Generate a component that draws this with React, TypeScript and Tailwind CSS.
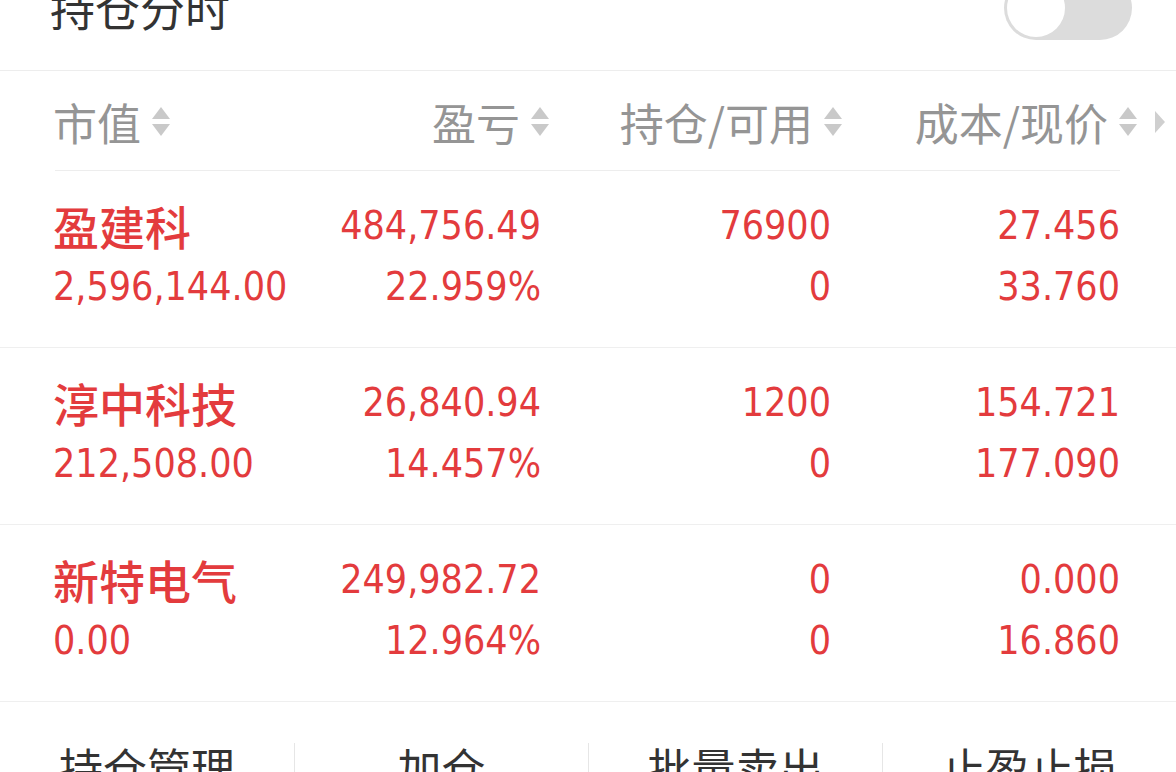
import React from 'react';

const cjk = '"Noto Sans CJK SC", "Noto Sans", sans-serif';
const num = '"DejaVu Sans Condensed", "DejaVu Sans", sans-serif';

interface Holding {
  name: string;
  value: string;
  pnl: string;
  pct: string;
  qty: string;
  avail: string;
  cost: string;
  price: string;
}

const holdings: Holding[] = [
  { name: '盈建科', value: '2,596,144.00', pnl: '484,756.49', pct: '22.959%', qty: '76900', avail: '0', cost: '27.456', price: '33.760' },
  { name: '淳中科技', value: '212,508.00', pnl: '26,840.94', pct: '14.457%', qty: '1200', avail: '0', cost: '154.721', price: '177.090' },
  { name: '新特电气', value: '0.00', pnl: '249,982.72', pct: '12.964%', qty: '0', avail: '0', cost: '0.000', price: '16.860' },
];

function SortArrows() {
  return (
    <svg width="20" height="32" viewBox="0 0 20 32" className="shrink-0">
      <polygon points="10,1 19,13 1,13" fill="#c9c9c9" />
      <polygon points="1,18 19,18 10,30" fill="#c9c9c9" />
    </svg>
  );
}

function HeaderCell({ label, end }: { label: string; end?: boolean }) {
  return (
    <div className={end ? 'flex items-center justify-end gap-[10px]' : 'flex items-center gap-[10px]'}>
      <span className="text-[44px] leading-[46px] text-[#959595]" style={{ fontFamily: cjk }}>
        {label}
      </span>
      <SortArrows />
    </div>
  );
}

function Row({ h }: { h: Holding }) {
  const n = 'text-[39px] leading-[61px] text-[#e33b3d]';
  return (
    <div className="grid grid-cols-[260px_228px_290px_289px] pl-[53px] pt-[24px] pb-[30px] border-b border-[#efefef]">
      <div className="flex flex-col">
        <span className="text-[46px] leading-[61px] font-medium text-[#e33b3d]" style={{ fontFamily: cjk }}>
          {h.name}
        </span>
        <span className={n} style={{ fontFamily: num }}>{h.value}</span>
      </div>
      <div className="flex flex-col items-end">
        <span className={n} style={{ fontFamily: num }}>{h.pnl}</span>
        <span className={n} style={{ fontFamily: num }}>{h.pct}</span>
      </div>
      <div className="flex flex-col items-end">
        <span className={n} style={{ fontFamily: num }}>{h.qty}</span>
        <span className={n} style={{ fontFamily: num }}>{h.avail}</span>
      </div>
      <div className="flex flex-col items-end">
        <span className={n} style={{ fontFamily: num }}>{h.cost}</span>
        <span className={n} style={{ fontFamily: num }}>{h.price}</span>
      </div>
    </div>
  );
}

export default function App() {
  const actions = ['持仓管理', '加仓', '批量卖出', '止盈止损'];
  return (
    <div className="w-[1176px] h-[772px] overflow-hidden bg-white">
      {/* title bar */}
      <div className="flex justify-between h-[71px] border-b border-[#ededed] pl-[50px] pr-[44px]">
        <span className="mt-[-15px] text-[45px] leading-[45px] text-[#333333]" style={{ fontFamily: cjk }}>
          持仓分时
        </span>
        <div className="mt-[-24px] w-[128px] h-[64px] rounded-full bg-[#dcdcdc] p-[3px]">
          <div className="w-[58px] h-[58px] rounded-full bg-white" />
        </div>
      </div>

      {/* column headers */}
      <div className="h-[100px] flex flex-col">
        <div className="flex-1 flex items-center pt-[2px]">
          <div className="grid grid-cols-[260px_237px_293px_295px] pl-[53px] items-center">
            <HeaderCell label="市值" />
            <HeaderCell label="盈亏" end />
            <HeaderCell label="持仓/可用" end />
            <HeaderCell label="成本/现价" end />
          </div>
          <svg width="12" height="24" viewBox="0 0 12 24" className="ml-[16px]">
            <polygon points="1,1 11,12 1,23" fill="#cfcfcf" />
          </svg>
        </div>
        <div className="ml-[55px] w-[1065px] h-px bg-[#ededed]" />
      </div>

      {holdings.map((h) => (
        <Row key={h.name} h={h} />
      ))}

      {/* bottom actions */}
      <div className="grid grid-cols-4 pt-[41px]">
        {actions.map((a, i) => (
          <div
            key={a}
            className={
              i === 0
                ? 'flex justify-center h-[60px]'
                : 'flex justify-center h-[60px] border-l border-[#e6e6e6]'
            }
          >
            <span className="text-[44px] leading-[46px] text-[#333333] mt-[1px]" style={{ fontFamily: cjk }}>
              {a}
            </span>
          </div>
        ))}
      </div>
    </div>
  );
}
